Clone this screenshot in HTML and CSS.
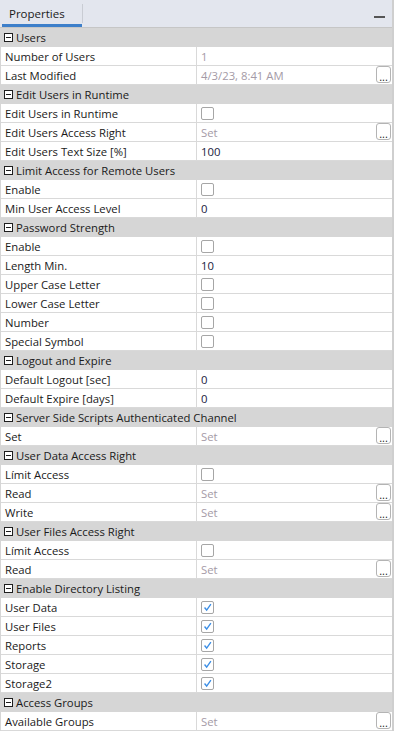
FILE: index.html
```html
<!DOCTYPE html>
<html>
<head>
<meta charset="utf-8">
<link rel="stylesheet" href="styles.css">
</head>
<body>
<div class="panel">
  <div class="header">
    <div class="tab">Properties</div>
    <div class="tab-sep"></div>
    <div class="spacer"></div>
    <div class="minimize"></div>
  </div>
  <div class="grid">
    <div class="cat"><span class="toggle"></span>Users</div>
    <div class="row"><div class="label">Number of Users</div><div class="value ro">1</div></div>
    <div class="row"><div class="label">Last Modified</div><div class="value ro">4/3/23, 8:41 AM<span class="dots">...</span></div></div>

    <div class="cat"><span class="toggle"></span>Edit Users in Runtime</div>
    <div class="row"><div class="label">Edit Users in Runtime</div><div class="value"><span class="check"></span></div></div>
    <div class="row"><div class="label">Edit Users Access Right</div><div class="value ro">Set<span class="dots">...</span></div></div>
    <div class="row"><div class="label">Edit Users Text Size [%]</div><div class="value">100</div></div>

    <div class="cat"><span class="toggle"></span>Limit Access for Remote Users</div>
    <div class="row"><div class="label">Enable</div><div class="value"><span class="check"></span></div></div>
    <div class="row"><div class="label">Min User Access Level</div><div class="value">0</div></div>

    <div class="cat"><span class="toggle"></span>Password Strength</div>
    <div class="row"><div class="label">Enable</div><div class="value"><span class="check"></span></div></div>
    <div class="row"><div class="label">Length Min.</div><div class="value">10</div></div>
    <div class="row"><div class="label">Upper Case Letter</div><div class="value"><span class="check"></span></div></div>
    <div class="row"><div class="label">Lower Case Letter</div><div class="value"><span class="check"></span></div></div>
    <div class="row"><div class="label">Number</div><div class="value"><span class="check"></span></div></div>
    <div class="row"><div class="label">Special Symbol</div><div class="value"><span class="check"></span></div></div>

    <div class="cat"><span class="toggle"></span>Logout and Expire</div>
    <div class="row"><div class="label">Default Logout [sec]</div><div class="value">0</div></div>
    <div class="row"><div class="label">Default Expire [days]</div><div class="value">0</div></div>

    <div class="cat"><span class="toggle"></span>Server Side Scripts Authenticated Channel</div>
    <div class="row"><div class="label">Set</div><div class="value ro">Set<span class="dots">...</span></div></div>

    <div class="cat"><span class="toggle"></span>User Data Access Right</div>
    <div class="row"><div class="label">Límit Access</div><div class="value"><span class="check"></span></div></div>
    <div class="row"><div class="label">Read</div><div class="value ro">Set<span class="dots">...</span></div></div>
    <div class="row"><div class="label">Write</div><div class="value ro">Set<span class="dots">...</span></div></div>

    <div class="cat"><span class="toggle"></span>User Files Access Right</div>
    <div class="row"><div class="label">Límit Access</div><div class="value"><span class="check"></span></div></div>
    <div class="row"><div class="label">Read</div><div class="value ro">Set<span class="dots">...</span></div></div>

    <div class="cat"><span class="toggle"></span>Enable Directory Listing</div>
    <div class="row"><div class="label">User Data</div><div class="value"><span class="check on"><svg viewBox="0 0 13 13"><path d="M3 6.5 L5.5 9.5 L10.5 2.5" fill="none" stroke="#3b8ee6" stroke-width="1.6"/></svg></span></div></div>
    <div class="row"><div class="label">User Files</div><div class="value"><span class="check on"><svg viewBox="0 0 13 13"><path d="M3 6.5 L5.5 9.5 L10.5 2.5" fill="none" stroke="#3b8ee6" stroke-width="1.6"/></svg></span></div></div>
    <div class="row"><div class="label">Reports</div><div class="value"><span class="check on"><svg viewBox="0 0 13 13"><path d="M3 6.5 L5.5 9.5 L10.5 2.5" fill="none" stroke="#3b8ee6" stroke-width="1.6"/></svg></span></div></div>
    <div class="row"><div class="label">Storage</div><div class="value"><span class="check on"><svg viewBox="0 0 13 13"><path d="M3 6.5 L5.5 9.5 L10.5 2.5" fill="none" stroke="#3b8ee6" stroke-width="1.6"/></svg></span></div></div>
    <div class="row"><div class="label">Storage2</div><div class="value"><span class="check on"><svg viewBox="0 0 13 13"><path d="M3 6.5 L5.5 9.5 L10.5 2.5" fill="none" stroke="#3b8ee6" stroke-width="1.6"/></svg></span></div></div>

    <div class="cat"><span class="toggle"></span>Access Groups</div>
    <div class="row"><div class="label">Available Groups</div><div class="value ro">Set<span class="dots">...</span></div></div>
  </div>
</div>
</body>
</html>
```
FILE: styles.css
```css
* { box-sizing: border-box; }
html, body { margin: 0; padding: 0; background: #fff; }
body {
  font-family: "Open Sans", "Noto Sans", sans-serif;
  font-size: 11.3px;
  color: #1a1a1a;
  width: 394px;
  height: 731px;
  overflow: hidden;
}
.panel {
  display: flex;
  flex-direction: column;
  border-right: 2px solid #cfcfcf;
  height: 731px;
}
.header {
  height: 28px;
  background: #e3e6ee;
  display: flex;
  align-items: stretch;
  border-bottom: 1px solid #c6c6c6;
  flex: none;
}
.tab {
  margin-left: 2px;
  width: 80px;
  padding-left: 7px;
  padding-top: 6px;
  border-bottom: 3px solid #3d7fca;
  color: #1a1a1a;
  font-size: 11.5px;
}
.tab-sep {
  width: 1px;
  background: #c9ccd3;
  margin: 4px 0 4px 0;
}
.spacer { flex: 1; }
.minimize {
  width: 11px;
  height: 2px;
  background: #555;
  margin: 16px 7px 0 0;
}
.grid {
  display: flex;
  flex-direction: column;
  background: #d6d6d6;
}
.cat {
  height: 19px;
  background: #d6d6d6;
  display: flex;
  align-items: center;
  padding-left: 4px;
}
.toggle {
  width: 9px;
  height: 9px;
  border: 1px solid #1e1e1e;
  position: relative;
  margin-right: 3px;
  background: #fff;
}
.toggle::after {
  content: "";
  position: absolute;
  left: 1px;
  top: 3px;
  width: 5px;
  height: 1px;
  background: #1e1e1e;
}
.row {
  height: 19px;
  display: flex;
  background: #fff;
  border-bottom: 1px solid #d9d9d9;
  margin-left: 1px;
}
.label {
  width: 196px;
  padding-left: 4px;
  display: flex;
  align-items: center;
  border-right: 1px solid #d9d9d9;
  white-space: nowrap;
}
.value {
  flex: 1;
  display: flex;
  align-items: center;
  padding-left: 4px;
  position: relative;
  color: #1a1a40;
}
.value.ro { color: #a49aa6; }
.dots {
  position: absolute;
  right: 1px;
  top: 0;
  width: 15px;
  height: 17px;
  border: 1px solid #b4b4b4;
  border-radius: 3px;
  background: #fff;
  color: #1e1e1e;
  font-size: 11px;
  line-height: 20px;
  text-align: center;
}
.check {
  width: 13px;
  height: 13px;
  border: 1px solid #a6a6a6;
  border-radius: 2px;
  background: #fff;
  display: block;
}
.check svg { display: block; width: 11px; height: 11px; }
```
